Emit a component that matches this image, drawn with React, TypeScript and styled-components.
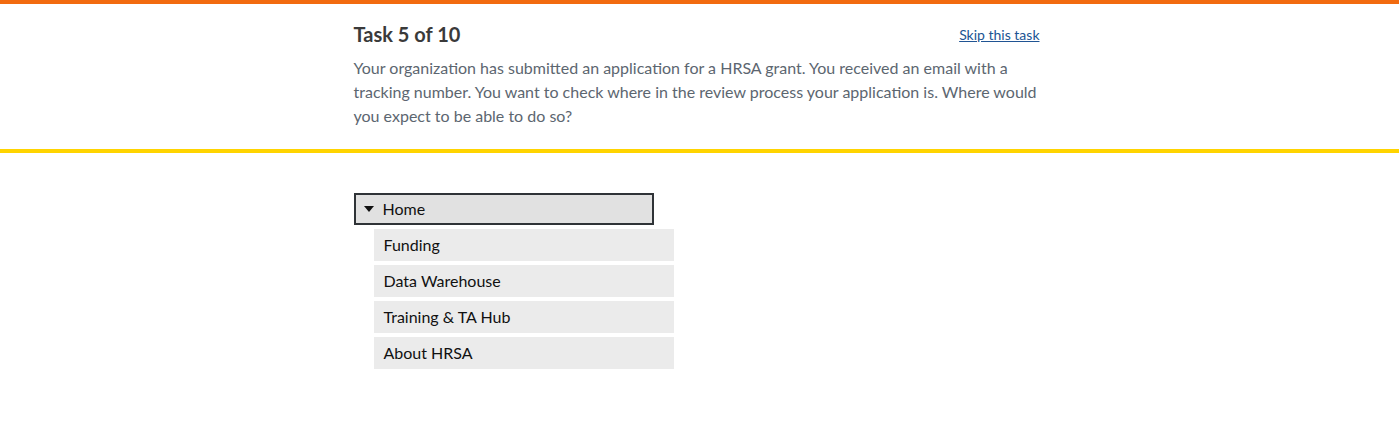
import React from "react";
import styled, { createGlobalStyle } from "styled-components";

const Global = createGlobalStyle`
  html, body { margin: 0; padding: 0; background: #fff; }
  body { font-family: Lato, "Noto Sans", Arial, sans-serif; }
`;

const Page = styled.div`
  border-top: 4px solid #f26b0f;
`;

const Header = styled.header`
  border-bottom: 4px solid #ffd400;
`;

const Container = styled.div`
  width: 686px;
  margin: 0 auto;
  position: relative;
  left: -3px;
`;

const HeaderInner = styled(Container)`
  padding: 18px 0 21px;
`;

const TitleRow = styled.div`
  display: flex;
  justify-content: space-between;
  align-items: center;
`;

const Title = styled.h1`
  margin: 0;
  font-size: 20px;
  font-weight: 700;
  color: #3a3a3a;
  line-height: 24px;
`;

const SkipLink = styled.a`
  font-size: 14px;
  color: #205493;
  text-decoration: underline;
  cursor: pointer;
`;

const Prompt = styled.p`
  margin: 10px 0 0;
  font-size: 16px;
  line-height: 24px;
  color: #5c6670;
`;

const Body = styled(Container)`
  padding-top: 40px;
`;

const Tree = styled.ul`
  list-style: none;
  margin: 0;
  padding: 0;
  display: flex;
  flex-direction: column;
  gap: 4px;
`;

const RootNode = styled.button`
  width: 300px;
  height: 32px;
  box-sizing: border-box;
  border: 2px solid #2f3337;
  background: #e1e1e1;
  display: flex;
  align-items: center;
  gap: 9px;
  padding: 0 0 2px 8px;
  font-family: inherit;
  font-size: 16px;
  color: #111;
  text-align: left;
`;

const Caret = styled.svg`
  width: 10px;
  height: 6px;
  flex: none;
  margin-top: 2px;
`;

const ChildNode = styled.li`
  margin-left: 20px;
  width: 300px;
  height: 32px;
  box-sizing: border-box;
  background: #ebebeb;
  display: flex;
  align-items: center;
  padding: 0 0 2px 10px;
  font-size: 16px;
  color: #111;
`;

const items = ["Funding", "Data Warehouse", "Training & TA Hub", "About HRSA"];

export default function App() {
  return (
    <>
      <Global />
      <Page>
        <Header>
          <HeaderInner>
            <TitleRow>
              <Title>Task 5 of 10</Title>
              <SkipLink>Skip this task</SkipLink>
            </TitleRow>
            <Prompt>
              Your organization has submitted an application for a HRSA grant. You received an email with a
              tracking number. You want to check where in the review process your application is. Where would
              you expect to be able to do so?
            </Prompt>
          </HeaderInner>
        </Header>
        <Body>
          <Tree>
            <li>
              <RootNode>
                <Caret viewBox="0 0 10 6">
                  <path d="M0 0 L10 0 L5 6 Z" fill="#111" />
                </Caret>
                Home
              </RootNode>
            </li>
            {items.map((it) => (
              <ChildNode key={it}>{it}</ChildNode>
            ))}
          </Tree>
        </Body>
      </Page>
    </>
  );
}
